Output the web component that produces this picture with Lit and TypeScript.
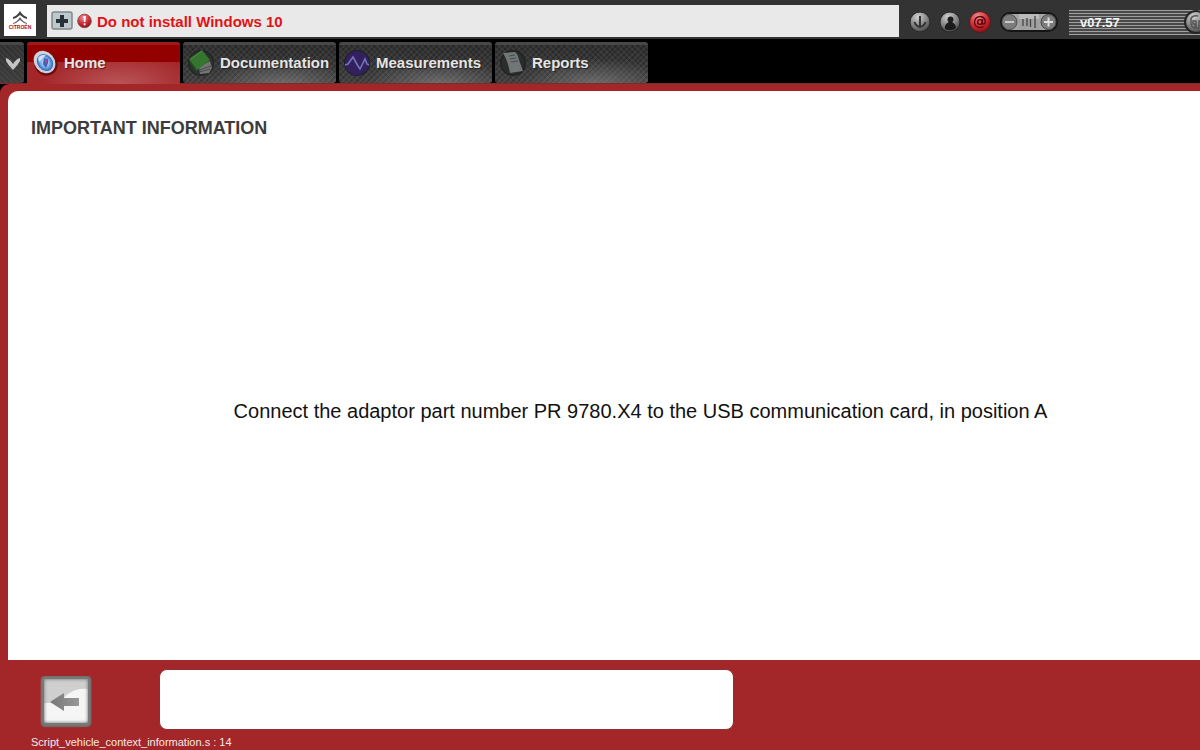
import { LitElement, html, css, svg } from "lit";
import { customElement, state } from "lit/decorators.js";
import { classMap } from "lit/directives/class-map.js";

const homeIcon = svg`
  <defs>
    <radialGradient id="dial"><stop offset="0" stop-color="#cfe8fa"/><stop offset=".55" stop-color="#7fb4e6"/><stop offset="1" stop-color="#2a62b8"/></radialGradient>
  </defs>
  <ellipse cx="15" cy="15" rx="11.5" ry="12" fill="#700b10" transform="rotate(-35 15 15)"/>
  <ellipse cx="13.500" cy="13" rx="10" ry="12" fill="#cdd2da" transform="rotate(-40 13.500 13)"/>
  <ellipse cx="14" cy="13.5" rx="7.500" ry="9" fill="url(#dial)" transform="rotate(-40 14 13.500)"/>
  <path d="M7 9q3-4 8-3l-3 3-4 4z" fill="#e8f3fb" opacity=".8"/>
  <path d="M13 9l4 1v4l-2 5-3-4z" fill="#3f5dc0"/><path d="M14 10l2 1-1 5z" fill="#cc4a72"/>`;
const docIcon = svg`
  <circle cx="14" cy="14" r="13" fill="#232323"/><circle cx="14" cy="14" r="12" fill="#2c302c"/>
  <path d="M12 18l11-6 2 7-3 5-9 1z" fill="#747474"/><path d="M12 21l12-4M12 23l11-3" stroke="#4b4b4b" stroke-width="1"/>
  <path d="M2 10L15 1l8 10-14 11z" fill="#35752f"/><path d="M2 10l8 11v3L3 14z" fill="#1d4f20"/>
  <path d="M4 10l11-8" stroke="#4d8a47" stroke-width="1" fill="none"/>`;
const measureIcon = svg`
  <circle cx="14" cy="14" r="13" fill="#202020"/><circle cx="14" cy="14" r="12" fill="#33215f"/>
  <path d="M2 16l3-1 5-7 5 9 2 3 5-10 2 5 2 1" fill="none" stroke="#7475b7" stroke-width="1.6"/>`;
const reportIcon = svg`
  <circle cx="14" cy="14" r="13" fill="#222"/><circle cx="14" cy="14" r="11.5" fill="#2b2d2d"/>
  <path d="M4 4l12-1q3 2 4 8l4 11-13 2q-2-12-7-20z" fill="#717777"/>
  <path d="M10 7l6-1M11 10l6-1M12 13l7-1" stroke="#474d4d" stroke-width="1"/>`;

const tabs = [
  { label: "Home", icon: homeIcon },
  { label: "Documentation", icon: docIcon },
  { label: "Measurements", icon: measureIcon },
  { label: "Reports", icon: reportIcon },
];

@customElement("app-root")
export class AppRoot extends LitElement {
  @state() private active = 0;

  static styles = css`
    :host {
      display: flex;
      flex-direction: column;
      min-height: 100vh;
      overflow: hidden;
      background: #a32628;
      font-family: "Liberation Sans", Arial, sans-serif;
    }
    *, *::before { box-sizing: border-box; }
    button { padding: 0; border: 0; background: none; font: inherit; color: inherit; cursor: pointer; }
    svg { display: block; flex: none; }
    .topbar { display: flex; align-items: center; height: 39px; padding: 0 0 0 4px; background: #333; }
    .logo { display: block; width: 32px; height: 32px; margin-right: 11px; background: #fff; }
    .notice { display: flex; align-items: center; flex: 1; height: 32px; margin-top: 2px; padding-left: 4px; gap: 4px; background: #e9e9e9; }
    .notice-text { font-size: 15px; line-height: 20px; padding-top: 2px; font-weight: 700; color: #e31216; }
    .tools { display: flex; align-items: center; margin: 5px 10px 0 10px; }
    .tool { width: 22px; height: 22px; margin-right: 8px; }
    .zoom { display: flex; width: 60px; height: 22px; }
    .version { display: flex; align-items: center; justify-content: space-between; width: 139px; height: 25px; margin: 5px -8px 0 0; padding-left: 11px; font-size: 13px; font-weight: 700; color: #f4f4f4; background: repeating-linear-gradient(#a0a0a0 0 1px, #484848 1px 3px); }
    .nav { display: flex; align-items: flex-start; gap: 3px; height: 45px; padding-top: 3px; background: #000; border-bottom: 1px solid #7d2a2c; }
    .tab, .toggle {
      display: flex;
      align-items: center;
      height: 41px;
      color: #e4e4e4;
      border-top: 3px solid #484848;
      background:
        radial-gradient(ellipse 75px 26px at 65% 105%, rgba(140, 140, 140, 0.6), rgba(140, 140, 140, 0)),
        repeating-linear-gradient(45deg, rgba(110, 110, 110, 0.15) 0 2px, transparent 2px 4px),
        repeating-linear-gradient(-45deg, rgba(10, 10, 10, 0.25) 0 2px, transparent 2px 4px),
        linear-gradient(#303030, #444);
    }
    .toggle {
      width: 24px;
      padding-left: 5px;
      border-radius: 0 3px 3px 0;
      background:
        repeating-linear-gradient(45deg, rgba(110, 110, 110, 0.15) 0 2px, transparent 2px 4px),
        linear-gradient(#303030, #3c3c3c);
    }
    .tab { width: 153px; gap: 5px; padding: 0 0 2px 4px; border-radius: 3px; font-size: 15px; line-height: 20px; font-weight: 700; text-shadow: 1px 1px 1px #222; }
    .tab.active {
      height: 42px;
      padding-bottom: 3px;
      border-top-color: #a01a1c;
      border-radius: 3px 3px 0 0;
      text-shadow: 1px 1px 1px #6b1113;
      background:
        linear-gradient(#930000 0 17px, transparent 17px),
        radial-gradient(ellipse 80px 32px at 60% 100%, #b95558, rgba(163, 38, 40, 0)),
        #a32628;
    }
    .corner { flex: 1; display: flex; background: linear-gradient(#000, #000) 0 0 / 9px 9px no-repeat; }
    .body { flex: 1; display: flex; padding: 7px 0 0 8px; background: #a32628; border-top-left-radius: 9px; }
    .panel { flex: 1; display: flex; flex-direction: column; background: #fff; border-top-left-radius: 10px; }
    .title { margin: 0; padding: 26px 23px 0; font-size: 18px; line-height: 22px; font-weight: 700; color: #3c3c3c; }
    .instruction { flex: 1; display: flex; align-items: center; justify-content: center; margin: 0; padding: 22px 0 0 73px; font-size: 20px; line-height: 24px; color: #111; }
    .footer { display: grid; grid-template-columns: 159px minmax(0, 575px) 1fr; align-items: start; padding-top: 9px; }
    .back { width: 52px; height: 52px; margin: 7px 0 0 40px; }
    .message { display: block; width: 100%; height: 61px; padding: 8px; resize: none; outline: 0; border: 1px solid #8f3133; border-radius: 8px; background: #fff; font: inherit; }
    .script { margin: 0; padding: 5px 0 1px 31px; font-size: 11px; line-height: 14px; color: #f6e9e9; }
  `;

  private defs() {
    return svg`<defs>
      <radialGradient id="metal" cx="40%" cy="25%" r="75%"><stop offset="0" stop-color="#d0d0d0"/><stop offset=".6" stop-color="#858585"/><stop offset="1" stop-color="#4a4a4a"/></radialGradient>
      <radialGradient id="red" cx="40%" cy="25%" r="75%"><stop offset="0" stop-color="#f09090"/><stop offset=".6" stop-color="#cd2b32"/><stop offset="1" stop-color="#8a1217"/></radialGradient>
    </defs>`;
  }

  render() {
    return html`
      <header class="topbar">
        <a class="logo" href="#" aria-label="Citroën">
          <svg width="32" height="32" viewBox="0 0 32 32">
            <path d="M9 13q4-1 7-6 3 5 7 6v2q-4-1-7-4-3 3-7 4z" fill="#444"/>
            <path d="M9 19q4-1 7-6 3 5 7 6v1q-4-1-7-4-3 3-7 4z" fill="#666"/>
            <text x="16" y="25" text-anchor="middle" font-size="5" font-weight="700" fill="#a80d32" font-family="Liberation Sans">CITROËN</text>
          </svg>
        </a>
        <div class="notice">
          <button aria-label="Expand messages">
            <svg width="22" height="20" viewBox="0 0 22 20">
              <rect x="1" y="1" width="20" height="17" rx="2" fill="#bec7c9" stroke="#7e898d" stroke-width="1.5"/>
              <path d="M9 4h4v4h4v4h-4v4H9v-4H5V8h4z" fill="#263238"/>
            </svg>
          </button>
          <svg width="16" height="16" viewBox="0 0 16 16">${this.defs()}
            <circle cx="7.500" cy="8" r="6.8" fill="url(#red)" stroke="#8c5555"/>
            <path d="M6.300 3h2.6L8.400 9H6.900zM6.700 10.3h1.8v2H6.700z" fill="#fff"/>
          </svg>
          <span class="notice-text">Do not install Windows 10</span>
        </div>
        <div class="tools">
          <button class="tool" aria-label="Download"><svg width="22" height="22" viewBox="0 0 22 22">${this.defs()}
            <circle cx="11" cy="11" r="10" fill="url(#metal)" stroke="#292929"/>
            <path d="M11 5v11M5.500 11q1 4 5.500 5 4.500-1 5.500-5" fill="none" stroke="#333" stroke-width="2"/></svg></button>
          <button class="tool" aria-label="User"><svg width="22" height="22" viewBox="0 0 22 22">${this.defs()}
            <circle cx="11" cy="11" r="10" fill="url(#metal)" stroke="#292929"/>
            <circle cx="11.500" cy="8.500" r="3" fill="#1c1c1c"/><path d="M6 18q-1-5 4-7h3q4 2 4 6-4 4-11 1z" fill="#1c1c1c"/></svg></button>
          <button class="tool" aria-label="Mail"><svg width="22" height="22" viewBox="0 0 22 22">${this.defs()}
            <circle cx="11" cy="11" r="10.500" fill="url(#red)" stroke="#571b1d"/>
            <circle cx="11" cy="11" r="2.4" fill="none" stroke="#5d0509" stroke-width="1.4"/>
            <path d="M13.600 8l-.4 4.500q2 1.500 3-1 .5-5-4.500-6-5.500-.2-6.200 5.500.3 5 5 5.500 2.500 0 4-1" fill="none" stroke="#5d0509" stroke-width="1.400"/></svg></button>
          <div class="zoom">
            <button aria-label="Zoom out"><svg width="20" height="22" viewBox="0 0 20 22">${this.defs()}
              <path d="M20 1H11a10 10 0 0 0 0 20h9z" fill="#151515"/><path d="M20 3H11a8 8 0 0 0 0 16h9z" fill="#a4a4a4"/>
              <circle cx="10.500" cy="11" r="7.500" fill="#7c7c7c" stroke="#505050"/><path d="M6 11h9" stroke="#c8c8c8" stroke-width="2"/></svg></button>
            <svg width="20" height="22" viewBox="0 0 20 22"><path d="M0 1h20v20H0z" fill="#151515"/><path d="M0 3h20v16H0z" fill="#a0a0a0"/><path d="M0 3h20v5H0z" fill="#bababa"/>
              <path d="M4 8v7M8 7v8M11.500 8v8M16 5v12" stroke="#4a4a4a" stroke-width="1.4"/></svg>
            <button aria-label="Zoom in"><svg width="20" height="22" viewBox="0 0 20 22">${this.defs()}
              <path d="M0 1h9a10 10 0 0 1 0 20H0z" fill="#151515"/><path d="M0 3h9a8 8 0 0 1 0 16H0z" fill="#a4a4a4"/>
              <circle cx="9.500" cy="11" r="7.500" fill="#7c7c7c" stroke="#444"/><path d="M5 11h9M9.500 6.500v9" stroke="#dedede" stroke-width="2"/></svg></button>
          </div>
        </div>
        <div class="version">
          <span>v07.57</span>
          <button aria-label="Version details"><svg width="24" height="24" viewBox="0 0 24 24">${this.defs()}
            <circle cx="12" cy="12" r="11" fill="url(#metal)" stroke="#242424" stroke-width="2"/>
            <path d="M14 6q-6-1-7 3v5q1 4 4 4v-4H9v-3h3v7h3v-7h3" fill="none" stroke="#555" stroke-width="1.500"/></svg></button>
        </div>
      </header>
      <nav class="nav">
        <button class="toggle" aria-label="Show menu">
          <svg width="16" height="14" viewBox="0 0 16 14"><path d="M1 1q4 1 7 6 3-5 7-6v3q-2 4-7 9-5-5-7-9z" fill="#c4c4c4"/></svg>
        </button>
        ${tabs.map((tab, i) => html`
          <button class=${classMap({ tab: true, active: this.active === i })} @click=${() => (this.active = i)}>
            <svg width="28" height="28" viewBox="0 0 28 28">${tab.icon}</svg>
            <span>${tab.label}</span>
          </button>`)}
      </nav>
      <div class="corner">
        <div class="body">
          <main class="panel">
            <h1 class="title">IMPORTANT INFORMATION</h1>
            <p class="instruction">Connect the adaptor part number PR 9780.X4 to the USB communication card, in position A</p>
          </main>
        </div>
      </div>
      <footer>
        <div class="footer">
          <button class="back" aria-label="Back">
            <svg width="52" height="52" viewBox="0 0 52 52">
              <defs><linearGradient id="arrow" x2="1"><stop offset="0" stop-color="#777"/><stop offset="1" stop-color="#989898"/></linearGradient>
              <filter id="soft"><feGaussianBlur stdDeviation="1.500"/></filter></defs>
              <rect x="1" y="0" width="50" height="51" rx="4" fill="#6c6463"/>
              <rect x="4" y="3" width="44" height="44" rx="2" fill="#f5f5f5"/>
              <path d="M4 3h44v10Q36 12 28 18 18 28 4 27z" fill="#cfcfcf"/>
              <rect x="3" y="2" width="46" height="46" rx="3" fill="none" stroke="#7d8282" stroke-width="3" filter="url(#soft)"/>
              <path d="M10 26l14-9v5h15v8H24v5z" fill="url(#arrow)"/>
            </svg>
          </button>
          <textarea class="message" aria-label="Message" readonly></textarea>
        </div>
        <p class="script">Script_vehicle_context_information.s : 14</p>
      </footer>
    `;
  }
}
